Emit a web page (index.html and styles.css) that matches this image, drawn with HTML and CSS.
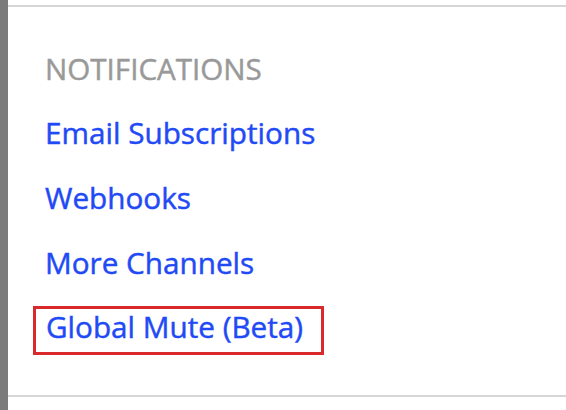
FILE: index.html
```html
<!DOCTYPE html>
<html lang="en">
<head>
<meta charset="utf-8">
<link rel="stylesheet" href="styles.css">
</head>
<body>
<div class="page">
  <div class="rail"></div>
  <main class="panel">
    <nav class="menu">
      <h2 class="menu-title">NOTIFICATIONS</h2>
      <a class="menu-link" href="#">Email Subscriptions</a>
      <a class="menu-link" href="#">Webhooks</a>
      <a class="menu-link" href="#">More Channels</a>
      <a class="menu-link is-highlighted" href="#">Global Mute (Beta)</a>
    </nav>
  </main>
</div>
</body>
</html>
```
FILE: styles.css
```css
html, body {
  margin: 0;
  padding: 0;
  background: #ffffff;
}
body {
  font-family: "Open Sans", "Liberation Sans", sans-serif;
}
.page {
  display: flex;
  width: 566px;
  height: 410px;
  overflow: hidden;
}
.rail {
  width: 8px;
  flex: none;
  background: #7b7b7b;
}
.panel {
  flex: 1;
  margin-top: 5px;
  height: 388px;
  border-top: 2px solid #d6d6d6;
  border-bottom: 2px solid #d6d6d6;
}
.menu {
  display: flex;
  flex-direction: column;
  align-items: flex-start;
  padding: 42px 0 0 25px;
}
.menu-title {
  margin: 0 0 24px 12px;
  font-size: 29.6px;
  font-weight: 400;
  color: #999999;
  -webkit-text-stroke: 0.45px #999999;
  line-height: 40px;
}
.menu-link {
  display: block;
  margin: 0 0 25px 12px;
  font-size: 29.7px;
  font-weight: 400;
  line-height: 40px;
  color: #1f4af5;
  -webkit-text-stroke: 0.45px #1f4af5;
  text-decoration: none;
}
.menu-link:nth-of-type(3) {
  margin-bottom: 23px;
}
.menu-link.is-highlighted {
  margin: 0;
  padding: 0 18px 7px 10px;
  line-height: 36px;
  border: 3px solid #d8292b;
}
```
